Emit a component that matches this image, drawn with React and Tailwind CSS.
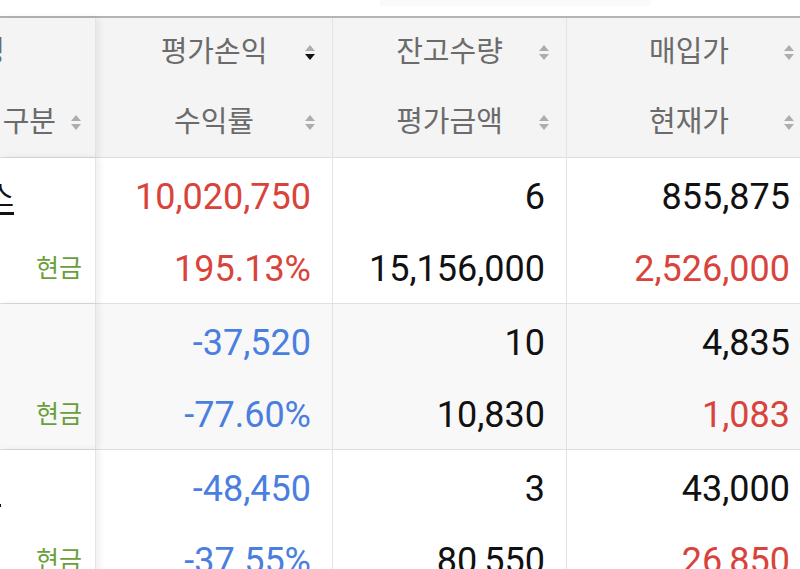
import React from 'react'

const font = { fontFamily: 'Roboto, "Noto Sans CJK KR", sans-serif' }

function SortIcon({ active }) {
  return (
    <svg width="12" height="18" viewBox="0 0 12 18" className="block">
      <polygon points="6,1 11,7 1,7" fill="#adadad" />
      <polygon points="1,10 11,10 6,16" fill={active ? '#111111' : '#adadad'} />
    </svg>
  )
}

function HeadCell({ top, bottom, activeTop }) {
  return (
    <div className="flex flex-col border-r border-[#e3e3e3]">
      <div className="h-[70px] grid grid-cols-[1fr_auto_1fr] items-center">
        <span />
        <span className="text-[29px] text-[#6b6b6b] whitespace-nowrap">{top}</span>
        <span className="justify-self-end pr-[16px]"><SortIcon active={activeTop} /></span>
      </div>
      <div className="h-[69px] grid grid-cols-[1fr_auto_1fr] items-center">
        <span />
        <span className="text-[29px] text-[#6b6b6b] whitespace-nowrap">{bottom}</span>
        <span className="justify-self-end pr-[16px]"><SortIcon /></span>
      </div>
    </div>
  )
}

function NumCell({ top, bottom, topColor, bottomColor }) {
  return (
    <div className="flex flex-col border-r border-[#e3e3e3] text-[36px] pr-[21px]">
      <div className={`h-[77px] flex items-center justify-end ${topColor}`}>{top}</div>
      <div className={`h-[68px] flex items-center justify-end ${bottomColor}`}>{bottom}</div>
    </div>
  )
}

const rows = [
  {
    name: '삼성바이오로직스', namePad: 'pr-[81px]', bg: 'bg-white',
    pl: '10,020,750', rate: '195.13%', plColor: 'text-[#d8443c]',
    qty: '6', amount: '15,156,000', buy: '855,875', cur: '2,526,000',
  },
  {
    name: '', namePad: 'pr-[81px]', bg: 'bg-[#f8f8f8]',
    pl: '-37,520', rate: '-77.60%', plColor: 'text-[#4a7fe0]',
    qty: '10', amount: '10,830', buy: '4,835', cur: '1,083',
  },
  {
    name: '미래에셋 TIGER Co.', namePad: 'pr-[94px]', bg: 'bg-white',
    pl: '-48,450', rate: '-37.55%', plColor: 'text-[#4a7fe0]',
    qty: '3', amount: '80,550', buy: '43,000', cur: '26,850',
  },
]

export default function App() {
  return (
    <div className="w-[800px] h-[569px] overflow-hidden bg-white" style={font}>
      <div className="h-[16px] flex">
        <div className="ml-[380px] w-[270px] h-[6px] bg-[#fafafa]" />
      </div>
      <div className="w-[812px] border-t-2 border-[#b4b4b4]">
        <div className="grid grid-cols-[96px_237px_234px_245px] h-[140px] bg-[#f4f4f4] border-b border-[#dedede]">
          <div className="relative z-10 flex flex-col bg-[#f4f4f4] border-r border-[#e3e3e3] shadow-[3px_0_7px_rgba(0,0,0,0.07)] overflow-hidden">
            <div className="h-[70px] flex items-center justify-end pr-[13px] whitespace-nowrap">
              <span className="text-[29px] text-[#6b6b6b] mr-[77px]">종목명</span>
              <SortIcon />
            </div>
            <div className="h-[69px] flex items-center justify-end pr-[13px] whitespace-nowrap">
              <span className="text-[29px] text-[#6b6b6b] mr-[14px]">구분</span>
              <SortIcon />
            </div>
          </div>
          <HeadCell top="평가손익" bottom="수익률" activeTop />
          <HeadCell top="잔고수량" bottom="평가금액" />
          <HeadCell top="매입가" bottom="현재가" />
        </div>

        {rows.map((r, i) => (
          <div key={i} className={`grid grid-cols-[96px_237px_234px_245px] h-[146px] border-b border-[#e0e0e0] ${r.bg}`}>
            <div className={`relative z-10 flex flex-col border-r border-[#e3e3e3] shadow-[3px_0_7px_rgba(0,0,0,0.07)] overflow-hidden ${r.bg}`}>
              <div className={`h-[77px] flex items-center justify-end whitespace-nowrap ${r.namePad}`}>
                <span className="text-[30px] text-[#111] underline underline-offset-[5px]">{r.name}</span>
              </div>
              <div className="h-[68px] flex items-center justify-end pr-[13px]">
                <span className="text-[25px] text-[#6a9f3c]">현금</span>
              </div>
            </div>
            <NumCell top={r.pl} bottom={r.rate} topColor={r.plColor} bottomColor={r.plColor} />
            <NumCell top={r.qty} bottom={r.amount} topColor="text-[#111]" bottomColor="text-[#111]" />
            <NumCell top={r.buy} bottom={r.cur} topColor="text-[#111]" bottomColor="text-[#d8443c]" />
          </div>
        ))}
      </div>
    </div>
  )
}
